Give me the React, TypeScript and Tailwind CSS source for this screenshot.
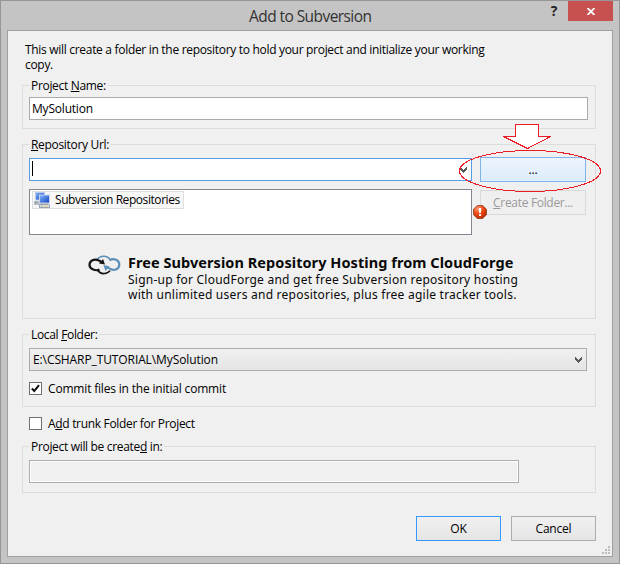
import type { ReactNode } from 'react';

interface GroupProps {
  label: ReactNode;
  className?: string;
  children: ReactNode;
}

function Group({ label, className, children }: GroupProps) {
  return (
    <fieldset className={`border border-[#dcdcdc] px-[6px] pb-0 ${className ?? ''}`}>
      <legend className="h-[15px] px-[2px] leading-[15px]">{label}</legend>
      {children}
    </fieldset>
  );
}

function Key({ children }: { children: string }) {
  return <span className="underline decoration-1 underline-offset-1">{children}</span>;
}

function Chevron({ className }: { className?: string }) {
  return (
    <svg width="7" height="6" viewBox="0 0 7 6" className={className} shapeRendering="crispEdges">
      <path d="M0 0h1v1h1v1h1v1h1v-1h1v-1h1v-1h1v3h-1v1h-1v1h-1v1h-1v-1h-1v-1h-1v-1h-1z" fill="#5a5a5a" />
    </svg>
  );
}

function Computers() {
  return (
    <svg width="16" height="16" viewBox="0 0 16 16" className="shrink-0">
      <defs>
        <linearGradient id="screen" x1="0" y1="0" x2="1" y2="1">
          <stop offset="0" stopColor="#7fb2f8" />
          <stop offset="1" stopColor="#1646c8" />
        </linearGradient>
      </defs>
      <rect x="1" y="0" width="10" height="8.5" fill="#b9c8e6" />
      <rect x="2" y="1" width="8" height="6.5" fill="url(#screen)" />
      <path d="M0 9h7v4H0z" fill="#b3bac9" />
      <path d="M1 10h2v1H1z" fill="#6fae4e" />
      <rect x="5" y="2.500" width="11" height="9" fill="#c4d0e8" />
      <rect x="6" y="3.500" width="9" height="7" fill="url(#screen)" />
      <path d="M7 11.500h7l1 1h1V16H5v-3.500h1z" fill="#98a2b8" />
      <path d="M6 13h9v2H6z" fill="#e4e7ee" />
      <path d="M7 13.500h1.500v1H7z" fill="#5fae3e" />
      <path d="M10 13.500h4v1h-4z" fill="#e2c95c" />
    </svg>
  );
}

function CloudForgeLogo() {
  return (
    <svg width="33" height="20" viewBox="0 0 33 20" fill="none">
      <path d="M9 4.500C11 2 14 1 16.500 1.300C19.500 1.600 21.500 3.300 22.300 5" stroke="#5d90b8" strokeWidth="1.500" />
      <path d="M21.500 5.200C26 2.600 31.300 5.300 31.300 9.600C31.300 14 26.300 16.200 22.500 14C21 13.500 20 12.800 19 12" stroke="#5d90b8" strokeWidth="2.200" />
      <path d="M15.500 10l6 1.500l-4 4.500z" fill="#5d90b8" />
      <path d="M11.500 14.500C8 16.300 1.500 14.500 1.500 9.800C1.500 5.500 6.500 3.400 10.300 5.300C12 6 13 6.800 14 7.500" stroke="#151515" strokeWidth="2.200" />
      <path d="M17 9.500l-6-1l4-4.500z" fill="#151515" />
      <path d="M9.500 15C11.500 18 15 19 17.500 18.300C19.500 18 21 17 22 15.800" stroke="#151515" strokeWidth="1.700" />
    </svg>
  );
}

function ErrorBadge() {
  return (
    <svg width="14" height="14" viewBox="0 0 14 14" className="absolute top-[205px] left-[473px]">
      <defs>
        <radialGradient id="alert" cx="0.35" cy="0.25" r="0.8">
          <stop offset="0" stopColor="#ff9a72" />
          <stop offset="0.5" stopColor="#ee4a14" />
          <stop offset="1" stopColor="#b52a00" />
        </radialGradient>
      </defs>
      <path d="M4.300.5h5.400l3.800 3.800v5.400l-3.800 3.800H4.300L.5 9.700V4.300z" fill="url(#alert)" stroke="#8f3d25" strokeWidth="0.800" />
      <path d="M5.700 3h2.600l-.4 5H6.100zM6 9h2v2H6z" fill="#fff" />
    </svg>
  );
}

// Red arrow and ring pointing at the browse button
function Callout() {
  return (
    <svg
      width="146"
      height="70"
      viewBox="0 0 146 70"
      className="pointer-events-none absolute top-[123px] left-[457px]"
      fill="none"
      stroke="#ed1c24"
      shapeRendering="crispEdges"
    >
      <path d="M58.500 1.500h23v12h12L70.500 25.500L46.500 13.500h12z" fill="#fff" />
      <ellipse cx="73" cy="48" rx="70.500" ry="20.500" />
    </svg>
  );
}

function CheckBox({ checked, children }: { checked?: boolean; children: ReactNode }) {
  return (
    <label className="flex h-[13px] items-center">
      <span className="flex size-[13px] items-center justify-center border border-[#707070] bg-white">
        {checked && (
          <svg width="9" height="9" viewBox="0 0 9 9" fill="none">
            <path d="M0.800 4.500L3.300 7L8 1.200" stroke="#111" strokeWidth="2" />
          </svg>
        )}
      </span>
      <span className="ml-[6px] leading-[15px]">{children}</span>
    </label>
  );
}

export default function App() {
  return (
    <div className="relative flex h-[564px] w-[620px] flex-col overflow-hidden border border-[#969696] bg-[#c4c4c4] font-['Open_Sans','Noto_Sans',sans-serif] text-[12px] tracking-[-0.32px] whitespace-nowrap text-black">
      <header className="flex h-[29px] shrink-0 items-start pr-[6px]">
        <h1 className="flex-1 pt-[4px] pl-[248px] text-[15.5px] leading-[22px] tracking-[-0.57px] text-[#333]">Add to Subversion</h1>
        <span className="mr-[11px] pt-[1px] text-[14px] leading-[17px] font-bold text-[#222]">?</span>
        <button className="flex h-[20px] w-[45px] items-center justify-center bg-[#c75050]">
          <svg width="8" height="7" viewBox="0 0 8 7" stroke="#fff" strokeWidth="1.800">
            <path d="M0.500 0L7.500 7M7.500 0L0.500 7" />
          </svg>
        </button>
      </header>

      <main className="mx-[6px] mb-[6px] flex flex-1 flex-col border border-[#a0a0a0] bg-[#f0f0f0] pr-[16px] pl-[14px]">
        <p className="mt-[11px] ml-[3px] h-[36px] leading-[15px] tracking-[-0.305px]">
          This will create a folder in the repository to hold your project and initialize your working
          <br />
          copy.
        </p>

        <Group label={<>Project <Key>N</Key>ame:</>} className="h-[51px]">
          <div className="mt-[4px] h-[23px] w-[559px] border border-[#ababab] bg-white pl-[2px] leading-[21px] tracking-[-0.2px]">MySolution</div>
        </Group>

        <Group label={<><Key>R</Key>epository Url:</>} className="mt-[8px] h-[182px]">
          <div className="flex pt-[5px]">
            <div className="w-[443px]">
              <div className="mt-[1px] flex h-[23px] items-center justify-between border border-[#569de5] bg-white pr-[4px] pl-[2px]">
                <span className="mb-[2px] h-[15px] w-px bg-black" />
                <Chevron />
              </div>
              <div className="mt-[8px] h-[46px] border border-[#828790] bg-white pt-px pl-[2px]">
                <div className="flex h-[18px] w-[152px] items-center border border-[#dedede] bg-[#f7f7f7] pl-px">
                  <Computers />
                  <span className="ml-[5px] leading-[16px] tracking-[-0.43px]">Subversion Repositories</span>
                </div>
              </div>
            </div>
            <div className="ml-[8px] flex w-[106px] flex-col gap-[8px]">
              <button className="h-[25px] border border-[#7eb4ea] bg-linear-to-b from-[#ecf4fc] to-[#dcecfc] tracking-[-0.1px]">...</button>
              <button className="h-[25px] border border-[#d9d9d9] bg-[#efefef] text-[#9a9a9a]">
                <Key>C</Key>reate Folder...
              </button>
            </div>
          </div>
          <div className="mt-[19px] flex pl-[59px] font-['Noto_Sans','Open_Sans',sans-serif] text-[#080808]">
            <div className="pt-[1px]">
              <CloudForgeLogo />
            </div>
            <div className="ml-[7px]">
              <h2 className="mb-px text-[14.5px] leading-[17px] font-bold tracking-[0.060px]">Free Subversion Repository Hosting from CloudForge</h2>
              <p className="text-[12px] leading-[15px] tracking-[0.235px]">
                Sign-up for CloudForge and get free Subversion repository hosting
                <br />
                with unlimited users and repositories, plus free agile tracker tools.
              </p>
            </div>
          </div>
        </Group>

        <Group label={<>Local <Key>F</Key>older:</>} className="mt-[8px] h-[80px]">
          <div className="mt-[6px] flex h-[23px] w-[558px] items-center justify-between border border-[#acacac] bg-linear-to-b from-[#f0f0f0] to-[#e5e5e5] pr-[4px] pl-[3px]">
            <span className="tracking-[-0.1px]">E:\CSHARP_TUTORIAL\MySolution</span>
            <Chevron />
          </div>
          <div className="mt-[11px] tracking-[-0.18px]">
            <CheckBox checked>Commit files in the initial commit</CheckBox>
          </div>
        </Group>

        <div className="mt-[10px] ml-[7px]">
          <CheckBox>A<Key>d</Key>d trunk Folder for Project</CheckBox>
        </div>

        <Group label={<>Project will be create<Key>d</Key> in:</>} className="mt-[9px] h-[54px]">
          <div className="mt-[6px] h-[23px] w-[490px] border border-[#abadb3] bg-[#f0f0f0] ring-1 ring-white ring-inset" />
        </Group>

        <footer className="mt-[23px] flex justify-end gap-[10px] tracking-[-0.2px]">
          <button className="h-[25px] w-[85px] border border-[#3399ff] bg-linear-to-b from-[#f0f0f0] to-[#e5e5e5]">OK</button>
          <button className="h-[25px] w-[85px] border border-[#acacac] bg-linear-to-b from-[#f0f0f0] to-[#e5e5e5]">Cancel</button>
        </footer>
      </main>

      <div className="pointer-events-none absolute inset-[-1px]">
        <ErrorBadge />
        <Callout />
        <svg width="8" height="8" viewBox="0 0 8 8" className="absolute top-[546px] left-[602px]" fill="#bdbdbd">
          <path d="M6 0h2v2H6zM3 3h2v2H3zM6 3h2v2H6zM0 6h2v2H0zM3 6h2v2H3zM6 6h2v2H6z" />
        </svg>
      </div>
    </div>
  );
}
